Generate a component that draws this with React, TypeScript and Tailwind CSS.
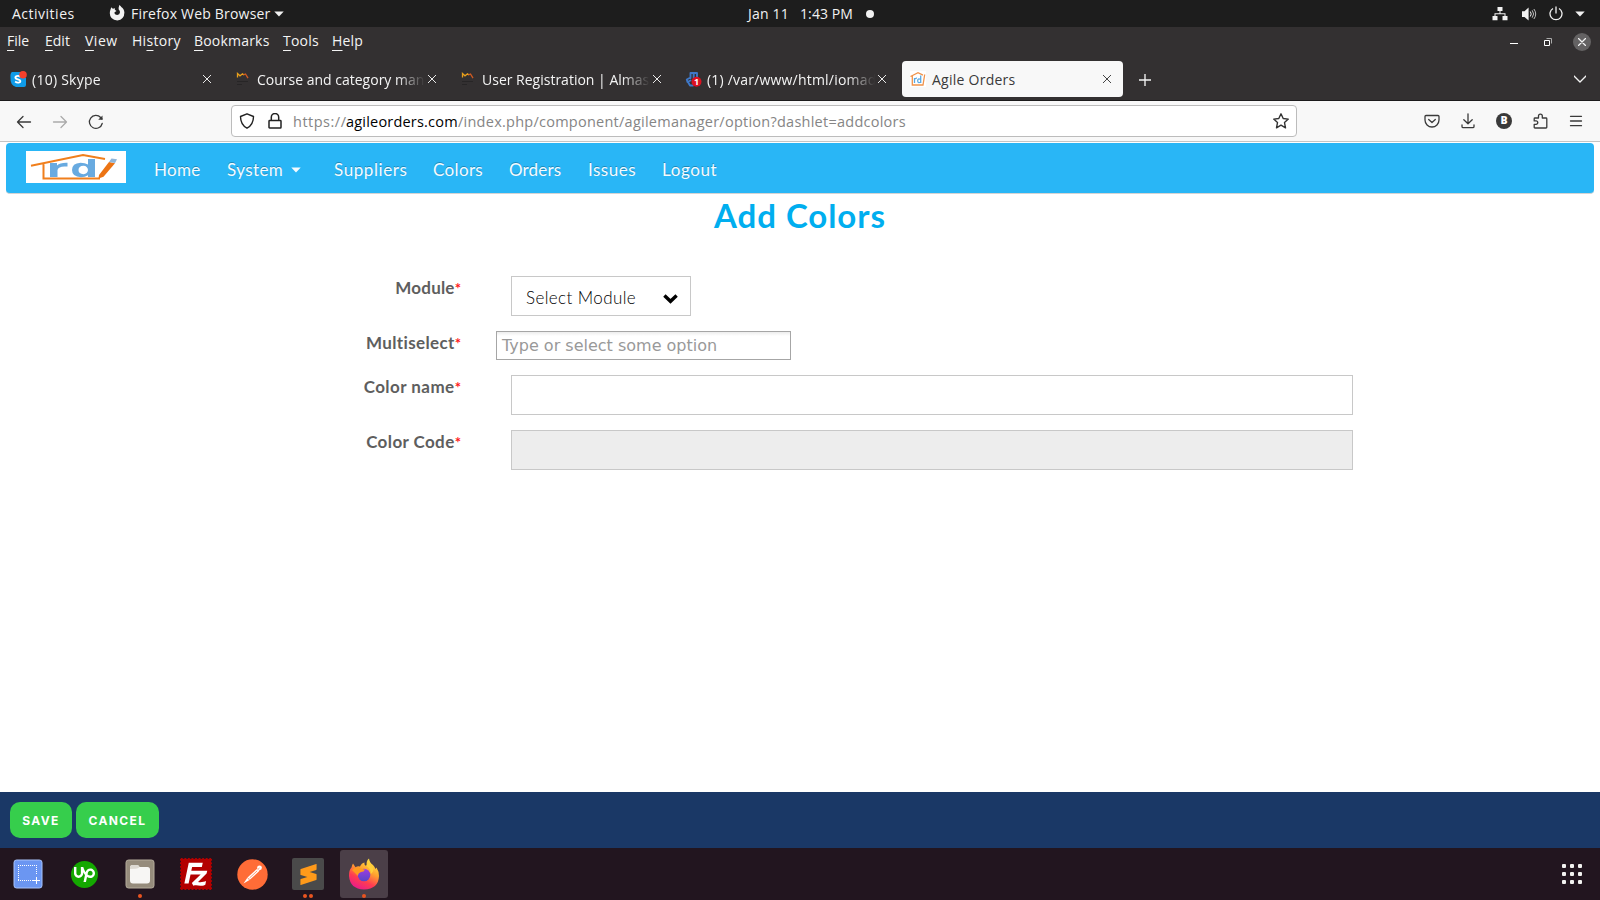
import type { ReactNode } from "react";
import { SiFilezilla, SiSublimetext, SiUpwork } from "react-icons/si";

const UI = "font-['Open_Sans','Noto_Sans',sans-serif]";
const WEB = "font-['Lato','Open_Sans',sans-serif]";

function Stroke({ size = 16, w = 1.3, className = "", children }: { size?: number; w?: number; className?: string; children: ReactNode }) {
  return (
    <svg width={size} height={size} viewBox="0 0 16 16" fill="none" stroke="currentColor" strokeWidth={w} strokeLinecap="round" strokeLinejoin="round" className={"block shrink-0 " + className}>
      {children}
    </svg>
  );
}

function Caret() {
  return (
    <svg width="10" height="6" viewBox="0 0 10 6" className="block shrink-0" fill="currentColor">
      <path d="M0.3 0.5h9.4L5 5.4z" />
    </svg>
  );
}

function TopBar() {
  return (
    <header className="flex h-[27px] items-center bg-[#1d1d1d] text-[14px] leading-[26px] tracking-[0.1px] text-[#f2f2f2] whitespace-nowrap">
      <span className="ml-3 w-[97px] tracking-[0.5px]">Activities</span>
      <svg width="16" height="16" viewBox="0 0 16 16" className="-mt-0.5 block" fill="#f2f2f2">
        <path fillRule="evenodd" d="M1.500 4.500Q1.800 3 2.700 2.200 3 3.500 4 3.800 5 3.200 6 3.300 5.300 4.500 6.300 5.200 7.500 5.300 7.300 6.200 5.500 6.800 5.300 8q.8 2 2.900 2 2.600-.3 2.800-2.700 0-1.600-1.200-2.500-.5-2 .5-4.800 1.500.8 2 2 2.800 1.500 3.100 5.500Q15.300 14.500 8.300 15.500 1 15 .8 8.300.8 6 1.500 4.500z" />
      </svg>
      <span className="ml-[6px] w-[143px] tracking-[0.2px]">Firefox Web Browser</span>
      <Caret />
      <span className="ml-[464px] w-[52px] tracking-[0.2px]">Jan 11</span>
      <span className="w-[66px]">1:43 PM</span>
      <i className="block size-2 rounded-full bg-[#f2f2f2]" />
      <div className="ml-auto mr-[15px] flex items-center">
        <svg width="16" height="14" viewBox="0 0 16 14" className="block" fill="currentColor">
          <path d="M5.500 0h5v4H8.500v2.200h5V9H15.500v4.200h-5V9h2V7.200h-9V9h2v4.200h-5V9h2V6.200h5V4H5.500z" />
        </svg>
        <svg width="16" height="16" viewBox="0 0 16 16" className="ml-[13px] block" fill="none" stroke="currentColor">
          <path d="M1 5.300h2.500L7.600 1.500v13L3.500 11H1z" fill="currentColor" stroke="none" />
          <path d="M9.300 5.500q1.800 2.500 0 5" />
          <path d="M11.200 4.300q2.800 3.700 0 7.400M12.900 3q3.600 5 0 10" opacity=".75" />
        </svg>
        <svg width="14" height="15" viewBox="0 0 14 15" className="ml-[12px] block" fill="none" stroke="currentColor" strokeWidth="1.300">
          <path d="M4 2.500a6 6 0 1 0 6 0M7 .5v7" />
        </svg>
        <span className="ml-[12px]"><Caret /></span>
      </div>
    </header>
  );
}

const menus: [string, string, string, string][] = [
  ["", "F", "ile", "w-[38px]"],
  ["", "E", "dit", "w-[40px]"],
  ["", "V", "iew", "w-[47px] tracking-[0.5px]"],
  ["Hi", "s", "tory", "w-[62px] tracking-[0.3px]"],
  ["", "B", "ookmarks", "w-[89px] tracking-[0.2px]"],
  ["", "T", "ools", "w-[49px] tracking-[0.2px]"],
  ["", "H", "elp", "w-[40px] tracking-[0.2px]"],
];

function MenuBar() {
  return (
    <div className="flex h-[31px] bg-[#333031] pl-[7px] text-[14px] leading-[27px] text-[#f4f4f4] whitespace-nowrap">
      {menus.map(([a, u, b, w]) => (
        <span key={u + b} className={w}>
          {a}
          <span className="underline underline-offset-[4px] decoration-1">{u}</span>
          {b}
        </span>
      ))}
      <div className="ml-auto mr-[9px] flex items-start">
        <i className="mt-[16px] mr-[26px] block h-px w-2 bg-white" />
        <svg width="8" height="8" viewBox="0 0 8 8" className="mt-[11px] mr-[21px] block" fill="none">
          <path d="M2.500.5h5v5" stroke="#aaa" />
          <path d="M.5 2.500h5v5h-5z" stroke="#fff" />
        </svg>
        <span className="mt-[6px] flex size-[18px] items-center justify-center rounded-full bg-[#646263]">
          <Stroke size={8} w={2.600}><path d="M1 1l14 14M15 1L1 15" /></Stroke>
        </span>
      </div>
    </div>
  );
}

function SkypeIcon() {
  return (
    <svg width="17" height="17" viewBox="0 0 17 17">
      <path d="M2 1h8l6 6v7q0 2-2 2H6Q0 14 .5 7 0 2 2 1z" fill="#0f9be8" />
      <path d="M10.500 5.700C7.500 4 5 5.300 5.500 7c.5 1.600 4.700 1.100 4.900 3 .1 1.700-2.900 2.400-5.300.6" stroke="#fff" strokeWidth="1.900" fill="none" />
      <circle cx="13" cy="3.800" r="3.800" fill="#f5402c" />
    </svg>
  );
}

function AlmasIcon() {
  return (
    <svg width="16" height="17" viewBox="0 0 16 17" fill="none">
      <path d="M2.500 6.500V2.500l2.500 2.300 2.500-2L9 4" stroke="#e8a01c" strokeWidth="1.300" />
      <path d="M8.500 3.800l2-.8L13 7.200" stroke="#cf5a22" strokeWidth="1.300" />
      <path d="M2 10.500h11M2 13.500h5" stroke="#272526" />
    </svg>
  );
}

function ServerIcon() {
  return (
    <svg width="17" height="17" viewBox="0 0 17 17">
      <path d="M5.500 7V2h6.500v4M8.700 2v5M5.500 6.500L1.800 8.500 2.500 11 5.500 9.500M3 11l2 3.500h3" stroke="#3f78c8" strokeWidth="1.900" fill="none" strokeLinecap="round" strokeLinejoin="round" />
      <circle cx="11.500" cy="10.800" r="5" fill="#dd1020" />
      <text x="11.500" y="14" fontSize="9" fontWeight="700" fill="#fff" textAnchor="middle" fontFamily="Open Sans">1</text>
    </svg>
  );
}

function RdMini() {
  return (
    <svg width="16" height="16" viewBox="0 0 16 16">
      <path d="M0 0h16v16H0z" fill="#fff" />
      <path d="M.5 5.500L8 1.700l5 2.500M2.300 5v9H13L14.700 3.500" stroke="#f0924a" strokeWidth="1.300" fill="none" />
      <path d="M4.500 12V7M4.500 8.500q1-1.500 2.500-1.300M10.700 4.500V12M10.700 8.500q-3-1.500-3 1.300t3 1.200" stroke="#5aa9e2" strokeWidth="1.300" fill="none" />
    </svg>
  );
}

const tabs: { icon: ReactNode; title: string; track: string; active?: boolean }[] = [
  { icon: <SkypeIcon />, title: "(10) Skype", track: "tracking-[0.25px]" },
  { icon: <AlmasIcon />, title: "Course and category man", track: "" },
  { icon: <AlmasIcon />, title: "User Registration | Almas", track: "" },
  { icon: <ServerIcon />, title: "(1) /var/www/html/iomad", track: "tracking-[0.2px]" },
  { icon: <RdMini />, title: "Agile Orders", track: "tracking-[0.25px]", active: true },
];

function TabBar() {
  return (
    <div className="flex h-[43px] border-b border-[#1c1b1c] bg-[#333031] pt-[3px] pl-[2px] text-[#f4f4f4]">
      {tabs.map((t) => (
        <div key={t.title} className={"mr-1 flex h-9 w-[221px] items-center rounded-[4px] pl-2 " + (t.active ? "bg-[#f8f8f8] text-[#3a3a3a]" : "")}>
          <span className="flex w-[22px]">{t.icon}</span>
          <span className={"w-[168px] pt-0.5 text-[14px] leading-[34px] whitespace-nowrap " + t.track + (t.active ? "" : " [mask-image:linear-gradient(to_right,#000_140px,transparent_168px)]")}>
            {t.title}
          </span>
          <Stroke size={8} w={1.900} className="ml-[3px]"><path d="M0 0l16 16M16 0L0 16" /></Stroke>
        </div>
      ))}
      <Stroke size={12} w={1.800} className="mt-[13px] ml-[12px]"><path d="M8 0v16M0 8h16" /></Stroke>
      <Stroke size={12} w={1.800} className="mt-3 mr-[14px] ml-auto"><path d="M0 4l8 8 8-8" /></Stroke>
    </div>
  );
}

function Toolbar() {
  return (
    <div className="flex h-[41px] items-center border-b border-[#c4c4c4] bg-[#f8f8f8] pl-4 text-[#3a3a3a]">
      <Stroke className="mt-px mr-5" w={1.300}><path d="M1.500 8h13M7 2.500L1.500 8 7 13.500" /></Stroke>
      <Stroke className="mt-px mr-5 text-[#ababab]" w={1.300}><path d="M1.500 8h13M9 2.500L14.500 8 9 13.500" /></Stroke>
      <Stroke className="mt-px mr-[127px]" w={1.300}><path d="M14.200 9.500A6.500 6.500 0 1 1 12.700 3.500L14 5" /><path d="M14.500 1.500v4.300h-4.300z" fill="currentColor" stroke="none" /></Stroke>
      <div className="flex h-8 w-[1066px] items-center rounded-[4px] border border-[#bcbcbc] bg-white pl-[7px] text-[14.5px] whitespace-nowrap text-[#858585]">
        <Stroke className="mr-3 text-[#222]" w={1.400}><path d="M8 .8l6.500 2.700c0 5-1.500 9-6.500 11.700C3 12.500 1.500 8.500 1.500 3.500z" /></Stroke>
        <Stroke className="mr-[10px] text-[#222]" w={1.500}><path d="M2.700 7.500h10.600q.7 0 .7.7v6q0 .8-.7.800H2.700q-.7 0-.7-.8v-6q0-.7.7-.7zM4.300 7V4.200a3.700 3.700 0 0 1 7.400 0V7" /></Stroke>
        <span className="w-[53px] pt-0.5 tracking-[0.5px]">https://</span>
        <span className="w-[112px] pt-0.5 tracking-[0.2px] text-black">agileorders.com</span>
        <span className="pt-0.5 tracking-[0.25px]">/index.php/component/agilemanager/option?dashlet=addcolors</span>
        <Stroke className="mr-[7px] ml-auto text-[#333]" w={1.400}><path d="M8 .8l2.200 4.700 5.100.6-3.800 3.500 1 5.200L8 12.200l-4.500 2.600 1-5.200L.7 6.100l5.100-.6z" /></Stroke>
      </div>
      <div className="mr-4 ml-auto flex items-center gap-5">
        <Stroke><path d="M2 2.500h12q1 0 1 1V7a7 7 0 0 1-14 0V3.500q0-1 1-1zM4.700 6.500L8 9.500l3.300-3" /></Stroke>
        <Stroke><path d="M8 .8v9.700M3.800 6.700L8 10.700l4.200-4M2 12v1.500q0 1.200 1.200 1.200h9.600q1.200 0 1.200-1.200V12" /></Stroke>
        <span className="flex size-4 items-center justify-center rounded-full bg-[#3a3a3a] text-[10.500px] font-extrabold text-white">B</span>
        <Stroke><path d="M3 5h3.500V3a1.900 1.900 0 0 1 3.800 0v2H14q.8 0 .8.800V14.200q0 .8-.8.800H3q-.8 0-.8-.8V11.300h1.900a1.700 1.700 0 0 0 0-3.400H2.200V5.800q0-.8.8-.8z" /></Stroke>
        <Stroke><path d="M2.500 3.300h11M2.500 8h11M2.500 12.700h11" /></Stroke>
      </div>
    </div>
  );
}

function RdLogo() {
  return (
    <svg width="100" height="32" viewBox="0 0 100 32" className="mb-[2px] block">
      <path d="M0 0h100v32H0z" fill="#fff" />
      <path d="M5 14.800L57 4l22 4M17.500 12v15.500H74" stroke="#f07f1c" strokeWidth="2" fill="none" />
      <path d="M24 12h7v2.500q3-3 10.500-2.700v3.800q-9-1-10 3.500V26H24z" fill="#68aae0" />
      <path fillRule="evenodd" d="M62 8h7v18h-7v-1.800q-3 2-7 2-9-.4-9-7.200t8.500-7.300q4.500 0 7.500 1.800zM57.500 14.800q-5 .2-5 4.200t5 4.200q4-.2 4.500-4.200-.5-4-4.500-4.200z" fill="#68aae0" />
      <path d="M83 11l6 1.200-11.500 13.500-5 1.800.5-3.500z" fill="#ec7414" />
      <path d="M85.500 7.500l5.500.7-2 3.800-6-1z" fill="#8fb6da" />
    </svg>
  );
}

const link = "pt-[4px] text-[17px] leading-[46px] ";

function SiteNav() {
  return (
    <nav className="mx-[6px] mt-px flex h-[51px] items-center rounded-[4px] border-b border-[#d4d4d4] bg-[#29b6f6] pl-5 whitespace-nowrap text-[#f4fbff] [text-shadow:0_-1px_0_rgba(0,0,0,0.25)]">
      <RdLogo />
      <a className={link + "ml-7 w-[73px] tracking-[0.3px]"}>Home</a>
      <a className={link + "w-[64px] tracking-[0.4px]"}>System</a>
      <span className="mr-[33px] pt-[3px]"><Caret /></span>
      <a className={link + "w-[99px] tracking-[0.6px]"}>Suppliers</a>
      <a className={link + "w-[76px] tracking-[0.35px]"}>Colors</a>
      <a className={link + "w-[79px] tracking-[0.15px]"}>Orders</a>
      <a className={link + "w-[74px] tracking-[0.5px]"}>Issues</a>
      <a className={link + "tracking-[0.6px]"}>Logout</a>
    </nav>
  );
}

function Row({ label, track, children }: { label: string; track: string; children: ReactNode }) {
  return (
    <div className="mb-[15px] flex">
      <label className={"w-[461px] text-right text-[17px] leading-[24px] font-bold text-[#5e5e5e] " + track}>
        {label}
        <span className="text-[15px] tracking-normal text-[#ff1a1a]">*</span>
      </label>
      {children}
    </div>
  );
}

function Form() {
  return (
    <main className={"flex grow flex-col bg-white " + WEB}>
      <SiteNav />
      <h1 className="mt-[2px] text-center text-[33px] leading-[39px] font-bold tracking-[0.95px] text-[#00aeef]">Add Colors</h1>
      <div className="mt-[41px]">
        <Row label="Module" track="tracking-[0.2px]">
          <div className="ml-[50px] flex h-10 w-[180px] items-center justify-between border border-[#c8c8c8] pr-[12px] pl-[14px] text-[17px] font-light text-black">
            <span className="pt-[4px] tracking-[0.4px]">Select Module</span>
            <svg width="15" height="10" viewBox="0 0 15 10" className="mt-[5px] block" fill="none" stroke="#000" strokeWidth="3.400">
              <path d="M1.400 1.500l6.100 5.800 6.100-5.800" />
            </svg>
          </div>
        </Row>
        <Row label="Multiselect" track="tracking-[0.35px]">
          <div className="ml-[35px] h-[29px] w-[295px] border border-[#a6a6a6] bg-[linear-gradient(#eee_1%,#fff_15%)] pl-[5px] font-['DejaVu_Sans',sans-serif] text-[16px] leading-[27px] text-[#999]">
            Type or select some option
          </div>
        </Row>
        <Row label="Color name" track="tracking-[0.45px]">
          <div className="ml-[50px] h-10 w-[842px] border border-[#c8c8c8]" />
        </Row>
        <Row label="Color Code" track="tracking-[0.4px]">
          <div className="ml-[50px] h-10 w-[842px] border border-[#c8c8c8] bg-[#ededed]" />
        </Row>
      </div>
      <footer className="mt-auto flex h-14 items-center gap-1 bg-[#1a3866] pl-[10px] font-['Inter','Open_Sans',sans-serif] text-[12px] font-bold tracking-[1.400px] text-white">
        <button className="h-9 w-[62px] rounded-[10px] bg-[#36ce4c] pt-px">SAVE</button>
        <button className="h-9 w-[83px] rounded-[10px] bg-[#36ce4c] pt-px">CANCEL</button>
      </footer>
    </main>
  );
}

function FirefoxIcon() {
  return (
    <svg width="32" height="32" viewBox="0 0 32 32">
      <defs>
        <linearGradient id="fx" x1=".8" y1="0" x2=".3" y2="1">
          <stop offset="0" stopColor="#fff04a" />
          <stop offset=".4" stopColor="#ffa22e" />
          <stop offset=".7" stopColor="#ff3d50" />
          <stop offset="1" stopColor="#e81a8c" />
        </linearGradient>
        <linearGradient id="fg" x1="0" y1="0" x2="0" y2="1">
          <stop offset="0" stopColor="#a13be0" />
          <stop offset="1" stopColor="#5547c8" />
        </linearGradient>
      </defs>
      <path d="M5 5.500l2.500 3.700Q9.500 8 12 8.500 13.500 5 16.500 4.500q-.5 2 .8 3L19 8Q17.500 3.500 21 .5q.5 4 4 6.500 1.500 1.500 2.500 4l1-1.500q2.500 4 2.500 8.500-.5 13-15 13.500Q2 31 1 18 .8 12 3.500 9.500 4 7 5 5.500z" fill="url(#fx)" />
      <circle cx="16" cy="17" r="6.300" fill="url(#fg)" />
      <path d="M4 12q4-4 9-1.500 2.500 1 4 1-1 2.500-4 2.500-3 1-3 4-3-3-6-6z" fill="#ff9a1f" />
      <path d="M18 7.500q5 3 4.800 8.500 3-2 2.500-6.500L21 4z" fill="#ffcf3a" />
    </svg>
  );
}

const dock: { name: string; dots: number; active?: boolean; icon: ReactNode }[] = [
  {
    name: "Screenshot", dots: 0,
    icon: (
      <svg width="30" height="30" viewBox="0 0 30 30">
        <rect x="1" y="1" width="28" height="28" rx="2.500" fill="#6b96f2" stroke="#a9c4fb" />
        <path d="M5 6.500h19M5 21.500h15M5.500 6v16M23.500 6v10" stroke="#fff" strokeDasharray="1 1" fill="none" />
        <path d="M23.500 18v7M20 21.500h7" stroke="#fff" />
      </svg>
    ),
  },
  {
    name: "Upwork", dots: 0,
    icon: (
      <span className="flex size-[27px] items-center justify-center rounded-full bg-[#14a800]">
        <SiUpwork size={21} color="#fff" />
      </span>
    ),
  },
  {
    name: "Files", dots: 1,
    icon: (
      <svg width="30" height="30" viewBox="0 0 30 30">
        <rect x="1" y="1" width="28" height="28" rx="2.500" fill="#968c7c" stroke="#b5ac9c" />
        <path d="M5 8.500q0-2.500 2.500-2.500h4q2.500 0 3 2h8q2.500 0 2.500 2.500v11q0 3-3 3H8q-3 0-3-3z" fill="#f7f6f4" />
        <path d="M5 10V8.500q0-2.500 2.500-2.500h4q2.500 0 3 2-1 1.700-4 1.700z" fill="#dedad3" />
      </svg>
    ),
  },
  {
    name: "FileZilla", dots: 0,
    icon: (
      <span className="flex size-8 bg-[linear-gradient(#fff,#fff)] bg-[length:26px_26px] bg-center bg-no-repeat">
        <SiFilezilla size={32} color="#b30000" />
      </span>
    ),
  },
  {
    name: "Postman", dots: 0,
    icon: (
      <svg width="31" height="31" viewBox="0 0 31 31">
        <circle cx="15.500" cy="15.500" r="15.200" fill="#ff6c37" />
        <path d="M6.500 24.500l4-6 9-8.300q1.300-.8 2.300.2 1 1.100 0 2.200L12.500 21z" fill="#fff" />
        <circle cx="22.500" cy="8.800" r="2.400" fill="#fff" />
        <path d="M10.500 18.500l2 2.500M12.500 19l7.500-7M20.500 10.800l2-1.800" stroke="#ff6c37" strokeWidth=".7" />
      </svg>
    ),
  },
  {
    name: "Sublime", dots: 2,
    icon: (
      <span className="flex size-8 items-center justify-center rounded-[2px] bg-[#4a4a4a]">
        <SiSublimetext size={21} color="#ff9a1a" />
      </span>
    ),
  },
  { name: "Firefox", dots: 1, active: true, icon: <FirefoxIcon /> },
];

function Dock() {
  return (
    <div className="flex h-[52px] items-start gap-2 bg-[#22151f] pt-[2px] pl-1">
      {dock.map((d) => (
        <div key={d.name} className={"relative flex size-12 items-center justify-center rounded-[3px] " + (d.active ? "bg-[#4b3f48]" : "")}>
          {d.icon}
          <div className="absolute inset-x-0 bottom-0 flex justify-center gap-[2.500px]">
            {Array.from({ length: d.dots }, (_, i) => (
              <i key={i} className="block size-1 rounded-full bg-[#e95420]" />
            ))}
          </div>
        </div>
      ))}
      <div className="mt-[14px] mr-[18px] ml-auto grid grid-cols-3 gap-1">
        {Array.from({ length: 9 }, (_, i) => (
          <i key={i} className="block size-1 rounded-[1px] bg-[#f2f2f0]" />
        ))}
      </div>
    </div>
  );
}

export default function App() {
  return (
    <div className={"flex h-[900px] w-[1600px] flex-col overflow-hidden bg-white " + UI}>
      <TopBar />
      <MenuBar />
      <TabBar />
      <Toolbar />
      <Form />
      <Dock />
    </div>
  );
}
